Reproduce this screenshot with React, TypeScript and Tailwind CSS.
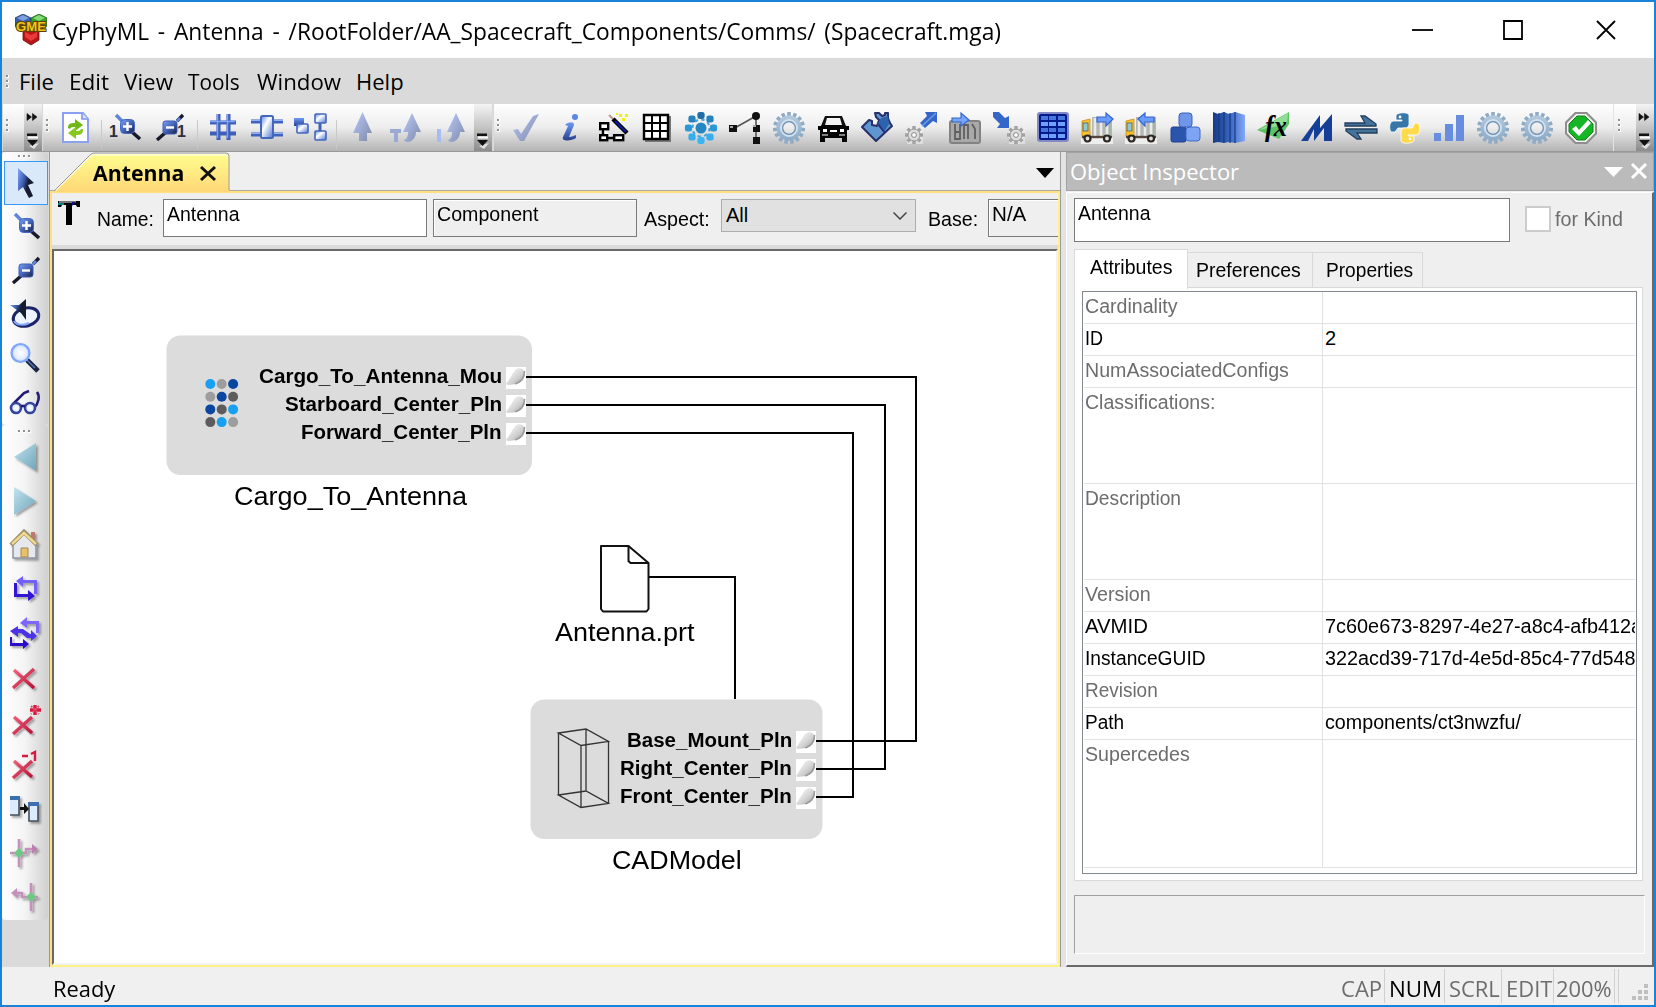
import { useLayoutEffect, useRef, useState, type ReactNode } from "react";

/* Text stretched horizontally so that it fills a given width. */
function Fit({ w, className = "", children }: { w: number; className?: string; children: ReactNode }) {
  const ref = useRef<HTMLSpanElement>(null);
  const [scale, setScale] = useState(1);
  useLayoutEffect(() => {
    if (ref.current) setScale(w / ref.current.offsetWidth);
  }, [w]);
  return (
    <span className={`block whitespace-pre ${className}`} style={{ width: w }}>
      <span ref={ref} className="inline-block origin-left" style={{ transform: `scaleX(${scale})` }}>
        {children}
      </span>
    </span>
  );
}

const UI = "font-['Open_Sans',sans-serif]";
const SANS = "font-['Liberation_Sans',sans-serif]";

function Icon({ children, className = "" }: { children: ReactNode; className?: string }) {
  return (
    <span className={`flex size-11 shrink-0 items-center justify-center ${className}`}>
      <svg viewBox="0 0 32 32" className="size-8 overflow-visible">
        {children}
      </svg>
    </span>
  );
}

function Defs() {
  return (
    <svg className="absolute size-0">
      <defs>
        <linearGradient id="blue" x1="0" y1="0" x2="1" y2="1">
          <stop offset="0" stopColor="#7ba0f4" />
          <stop offset=".5" stopColor="#4464b8" />
          <stop offset="1" stopColor="#16203c" />
        </linearGradient>
        <linearGradient id="cursor" x1="0" y1="0" x2="1" y2=".5">
          <stop offset="0" stopColor="#86a9f8" />
          <stop offset=".45" stopColor="#3d5cb4" />
          <stop offset=".7" stopColor="#171c30" />
        </linearGradient>
        <linearGradient id="blueV" x1="0" y1="0" x2="0" y2="1">
          <stop offset="0" stopColor="#6f9af8" />
          <stop offset="1" stopColor="#27408c" />
        </linearGradient>
        <linearGradient id="pale" x1="0" y1="0" x2="1" y2="1">
          <stop offset="0" stopColor="#b9cbfb" />
          <stop offset="1" stopColor="#7f88a8" />
        </linearGradient>
        <linearGradient id="box" x1="0" y1="0" x2="1" y2="1">
          <stop offset="0" stopColor="#5a86e8" />
          <stop offset=".4" stopColor="#ffffff" />
          <stop offset="1" stopColor="#4a70d0" />
        </linearGradient>
        <linearGradient id="teal" x1="0" y1="0" x2="1" y2="1">
          <stop offset="0" stopColor="#c3e3ee" />
          <stop offset="1" stopColor="#6da5ba" />
        </linearGradient>
        <linearGradient id="red" gradientUnits="userSpaceOnUse" x1="3" y1="6" x2="25" y2="28">
          <stop offset="0" stopColor="#fb6b86" />
          <stop offset="1" stopColor="#b30d33" />
        </linearGradient>
        <linearGradient id="gear" x1="0" y1="0" x2="0" y2="1">
          <stop offset="0" stopColor="#b4cbe0" />
          <stop offset="1" stopColor="#8ba9c6" />
        </linearGradient>
        <radialGradient id="lens">
          <stop offset="0" stopColor="#ffffff" />
          <stop offset=".7" stopColor="#e2ecff" />
          <stop offset="1" stopColor="#a8c3ff" />
        </radialGradient>
        <linearGradient id="port" x1="0" y1="0" x2="1" y2="1">
          <stop offset=".2" stopColor="#f2f2f2" />
          <stop offset=".6" stopColor="#cfcfcf" />
          <stop offset="1" stopColor="#8c8c8c" />
        </linearGradient>
        <linearGradient id="tab" x1="0" y1="0" x2="0" y2="1">
          <stop offset="0" stopColor="#fffd8e" />
          <stop offset="1" stopColor="#ffd777" />
        </linearGradient>
        <linearGradient id="book" x1="0" y1="0" x2="1" y2="0">
          <stop offset="0" stopColor="#173a86" />
          <stop offset=".55" stopColor="#3a68c4" />
          <stop offset="1" stopColor="#86a8f8" />
        </linearGradient>
        <filter id="shadow" x="-30%" y="-30%" width="160%" height="160%">
          <feDropShadow dx="2" dy="2" stdDeviation="1" floodColor="#000" floodOpacity=".35" />
        </filter>
      </defs>
    </svg>
  );
}

const TEETH = [0, 24, 48, 72, 96, 120, 144, 168, 192, 216, 240, 264, 288, 312, 336];

function Gear() {
  return (
    <Icon>
      <g fill="url(#gear)">
        {TEETH.map((a) => (
          <rect key={a} x="14.2" y="0" width="3.6" height="6" transform={`rotate(${a} 16 16)`} fill="#8fabc6" />
        ))}
        <path fillRule="evenodd" d="M16 3.5a12.5 12.5 0 1 0 0 25a12.5 12.5 0 1 0 0-25zM16 10a6 6 0 1 1 0 12a6 6 0 1 1 0-12z" />
      </g>
      <circle cx="16" cy="16" r="8" fill="none" stroke="#d4e0ec" strokeWidth="2" />
      <circle cx="16" cy="16" r="6.4" fill="none" stroke="#6f94b8" strokeWidth="1.200" />
    </Icon>
  );
}

function SmallGear({ x, y }: { x: number; y: number }) {
  return (
    <g>
      <rect x={x - 7} y={y - 7} width="16" height="16" fill="#eee" opacity=".6" />
      {[0, 45, 90, 135].map((a) => (
        <rect key={a} x={x - 1.7} y={y - 9} width="3.4" height="18" fill="#a2a2a2" transform={`rotate(${a} ${x} ${y})`} />
      ))}
      <circle cx={x} cy={y} r="6" fill="#dcdcdc" stroke="#999" />
      <circle cx={x} cy={y} r="2.4" fill="#fff" stroke="#888" />
    </g>
  );
}

function Truck({ left }: { left?: boolean }) {
  return (
    <Icon>
      <rect x="0" y="26" width="32" height="6" fill="#eeeeee" />
      <path d="M11 5h20v20H11z" fill="#b4b8b5" />
      <path d="M14 6v18M20 6v18M26 6v18" stroke="#e9ebe9" strokeWidth="2.6" />
      <path d="M29 6v18" stroke="#a3b6a3" strokeWidth="2" />
      <path d="M1 9l8-2v17H1z" fill="#fdc02c" stroke="#c98f10" strokeWidth=".8" />
      <rect x="2" y="11" width="5" height="8" fill="#8ccbd6" stroke="#47616a" strokeWidth=".8" />
      <path d="M1 25h30" stroke="#55443a" strokeWidth="2.4" />
      <g fill="#ddd" stroke="#2d2622" strokeWidth="2.2">
        <circle cx="6.500" cy="26.5" r="3" />
        <circle cx="26" cy="26.5" r="3" />
      </g>
      <path
        d={left ? "M13 7l7-6v4h9v5h-9v4z" : "M32 7l-7-6v4h-9v5h9v4z"}
        fill="#6a9bff"
        stroke="#3465cf"
        strokeWidth="1.2"
      />
    </Icon>
  );
}

function Magnifier({ minus }: { minus?: boolean }) {
  return minus ? (
    <>
      <path d="M2 28l8-7M22 9l6-6" stroke="#161a2c" strokeWidth="3.4" />
      <path d="M22 9l3-3" stroke="#5f83df" strokeWidth="3" />
      <rect x="8" y="9" width="14" height="13" rx="2.5" fill="url(#blue)" stroke="#3c5cb4" />
      <path d="M11 15.5h8" stroke="#fff" strokeWidth="2.4" />
    </>
  ) : (
    <>
      <path d="M4 3l6 6" stroke="#5f83df" strokeWidth="3.4" />
      <path d="M20 20l8 7" stroke="#161a2c" strokeWidth="3.6" />
      <rect x="8.500" y="7.500" width="14" height="14" rx="4" fill="url(#blue)" stroke="#4467c4" />
      <path d="M11 14.500h9M15.500 10v9" stroke="#fff" strokeWidth="2.4" />
    </>
  );
}

function ArrowUp({ x }: { x: number }) {
  return <path transform={`translate(${x} 0)`} d="M9.500 0L19 21h-5v8H6v-8H0z" fill="url(#pale)" />;
}

function BentArrow({ x }: { x: number }) {
  return (
    <path
      transform={`translate(${x} 0)`}
      d="M12 1l9 19h-5c0 5-3 9-8 10c-2 0-4-1-4-2c3-1 4-4 4-8H3z"
      fill="url(#pale)"
    />
  );
}

function Grip({ className = "" }: { className?: string }) {
  return (
    <span className={`flex w-1 shrink-0 flex-col gap-[2px] ${className}`}>
      {[0, 1, 2].map((i) => (
        <i key={i} className="size-[3px] border-r border-b border-white bg-[#909090]" />
      ))}
    </span>
  );
}

function ToolbarEnd({ chevron, w }: { chevron?: boolean; w: string }) {
  return (
    <span className={`flex h-full shrink-0 justify-center bg-linear-to-b from-[#f4f4f4] via-[#c4c4c4] to-[#8c8c8c] ${w}`}>
      <svg viewBox="0 0 18 47" className="h-[47px] w-[18px]">
        {chevron && <path d="M3 9.500l4.500 3.500L3 16.500zM8.500 9.500l4.500 3.500l-4.500 3.500z" fill="#111" stroke="#111" strokeWidth=".6" />}
        <path d="M4 33.500h10" stroke="#fff" strokeWidth="2" />
        <path d="M5 42l5 3l5-6z" fill="#fff" opacity=".7" />
        <path d="M3 29.500h10v2.500H3zM3 36h11l-5.500 6z" fill="#111" />
      </svg>
    </span>
  );
}

function Sep({ w }: { w: string }) {
  return (
    <span className={`flex h-full shrink-0 justify-center pt-4 ${w}`}>
      <i className="h-[29px] w-px bg-[#c9c9c9]" />
    </span>
  );
}

const METAL = "bg-linear-to-b from-white via-[#ededed] to-[#b4b4b4]";

function MainToolbar() {
  return (
    <div className={`flex h-[47px] w-[449px] items-center ${METAL}`}>
      <Grip className="ml-[3px] mr-[4px] -mt-1" />
      <Icon>
        <path d="M3 1h20l5 6v23H3z" fill="#fff" stroke="#8ba0f0" strokeWidth="2" />
        <path d="M22 1v6h6" fill="#dbe3ff" stroke="#7f97ee" strokeWidth="1.6" />
        <path d="M8 16c0-4 2-5 7-5V7l8 6l-8 6v-4c-3 0-4 0-5 2z" fill="#6fb713" />
        <path d="M23 17c0 5-2 6-7 6v4l-8-6l8-6v4c3 0 4 0 5-2z" fill="#86c91c" />
      </Icon>
      <Sep w="w-[6px]" />
      <Icon className="-ml-px">
        <text x="0" y="25" fontSize="16" fontWeight="700" fontFamily="Liberation Sans" fill="#2b3040">1</text>
        <g transform="translate(3 0)"><Magnifier /></g>
      </Icon>
      <Icon className="ml-[2px]">
        <Magnifier minus />
        <text x="22" y="25" fontSize="16" fontWeight="700" fontFamily="Liberation Sans" fill="#2b3040">1</text>
      </Icon>
      <Sep w="w-2" />
      <Icon>
        <path d="M3 10.500h26M3 21.500h26M11.500 2v26M21.500 2v26" stroke="#3d5fb9" strokeWidth="4" />
        <path d="M3 9.500h25M10.500 2v24M20.500 2v24" stroke="#7fa3f5" strokeWidth="1.4" />
      </Icon>
      <Icon>
        <path d="M0 9.500h32M0 22.500h32" stroke="#3f62bd" strokeWidth="4" />
        <path d="M0 8.500h32M0 21.500h32" stroke="#8fb0fa" strokeWidth="1.2" />
        <rect x="10" y="4" width="12" height="22" rx="1.500" fill="url(#box)" stroke="#4466bd" strokeWidth="2" />
      </Icon>
      <Icon className="-ml-px">
        <path d="M26 9v12" stroke="#3f62bd" strokeWidth="3" />
        <rect x="0" y="6" width="10" height="8" fill="url(#blueV)" />
        <rect x="3" y="12" width="11" height="9" rx="1" fill="url(#box)" stroke="#4365bd" strokeWidth="1.6" />
        <rect x="21" y="2" width="11" height="9" rx="1" fill="url(#box)" stroke="#4365bd" strokeWidth="1.6" />
        <rect x="21" y="19" width="11" height="9" rx="1" fill="url(#box)" stroke="#4365bd" strokeWidth="1.6" />
      </Icon>
      <Sep w="w-2" />
      <Icon><ArrowUp x={7} /></Icon>
      <Icon>
        <BentArrow x={10} />
        <path d="M0 17h11v4H8v9H4v-9H0z" fill="#9ba9d4" />
      </Icon>
      <Icon>
        <BentArrow x={10} />
        <path d="M3 17h4v13H3z" fill="#a8bbf2" />
      </Icon>
      <span className="flex-1" />
      <ToolbarEnd w="w-[18px]" />
    </div>
  );
}

const PETALS: [number, number, string][] = [
  [16, 3.5, "#1f6fa8"],
  [25, 7, "#2883bd"],
  [28.5, 16, "#2d96d4"],
  [25, 25, "#35aeee"],
  [16, 28.5, "#39b5f5"],
  [7, 25, "#35aeee"],
  [3.5, 16, "#2d96d4"],
  [7, 7, "#2883bd"],
];

function ComponentToolbar() {
  return (
    <div className={`flex h-[47px] w-[1119px] items-center ${METAL}`}>
      <Grip className="ml-[3px] mr-[2px] -mt-1" />
      <Icon>
        <path d="M4 18l5-1l3 5L24 4l6-2L15 29h-4z" fill="url(#pale)" />
      </Icon>
      <Icon>
        <circle cx="22" cy="5" r="3" fill="#5a86ea" />
        <path d="M12 13c3-3 9-4 9 0l-5 12c2 0 4-1 7-2v3c-4 3-15 4-13-1l5-11z" fill="url(#blueV)" />
      </Icon>
      <Icon>
        <g fill="#fff" stroke="#000" strokeWidth="2.4">
          <path d="M6 16v10h10M6 26h10" />
          <rect x="3.200" y="11.200" width="8" height="6" />
          <rect x="3.200" y="23.200" width="7" height="5" />
          <rect x="17.200" y="23.200" width="9" height="5" />
        </g>
        <path d="M12 3l5 5" stroke="#b99a8a" strokeWidth="2" />
        <path d="M16 7l14 14" stroke="#000" strokeWidth="4.400" />
        <path d="M18 9l11 11" stroke="#101a9c" strokeWidth="2" />
        <path d="M22 2h3v3h-3zM28 2h3v3h-3zM25 6h3v3h-3zM19 1h2v2h-2z" fill="#f5f000" />
      </Icon>
      <Icon>
        <path d="M4 4h26v26H4z" fill="#777" />
        <path d="M3 3h24v24H3z" fill="#fff" stroke="#000" strokeWidth="2.400" />
        <path d="M11 3v24M19 3v24M3 11h24M3 19h24" stroke="#000" strokeWidth="2" />
      </Icon>
      <Icon>
        <circle cx="16" cy="16" r="8.500" fill="none" stroke="#49a3d8" strokeWidth="2" strokeDasharray="3.400 3.270" />
        {PETALS.map(([x, y, c]) => (
          <rect key={`${x}-${y}`} x={x - 3.6} y={y - 3.6} width="7.200" height="7.200" rx="2.400" fill={c} />
        ))}
        <circle cx="16" cy="16" r="5.500" fill="#2587c2" />
      </Icon>
      <Icon>
        <path d="M4 17L27 4M27 4v24" stroke="#555" strokeWidth="1.600" />
        <circle cx="27" cy="4" r="4" fill="#111" />
        <path d="M0 13h8v7H0zM24 13h7v7h-7zM24 25h7v7h-7z" fill="#111" />
        <path d="M1 14h3v2H1zM24 13h3v2h-3z" fill="#aaa" />
      </Icon>
      <Gear />
      <Icon>
        <path d="M8 4h17l4 10H4z" fill="#111" />
        <path d="M10 6h13l2 7H8z" fill="#f4f4f4" />
        <path d="M1 14h3l2-1h21l2 1h3v4h-2v12h-5v-4H8v4H3V18H1z" fill="#050505" />
        <path d="M6 17h4v3H6zM23 17h4v3h-4zM13 18h7v2h-7z" fill="#fff" />
        <path d="M5 23h6M22 23h6" stroke="#aaa" strokeWidth="1.400" />
      </Icon>
      <Icon>
        <path d="M1 15l4-4l3-3l3 1v4l5 1l2-6l-3-3l-1-4h4l3 3l3-1V1h3v5l2 5l2 3L15 29z" fill="#5f96cf" stroke="#27306b" strokeWidth="2" strokeLinejoin="round" />
        <path d="M16 13l4-7l7-2l1 8l-5 8z" fill="#2d62ad" />
        <path d="M17 12l7 9" stroke="#30307c" strokeWidth="2" />
      </Icon>
      <Icon>
        <SmallGear x={9} y={23} />
        <path d="M20 0h12v11l-4-2l-8 7l-5-5l7-7z" fill="#3566c8" />
        <path d="M31 1L17 14" stroke="#6f9ce8" strokeWidth="1.500" />
      </Icon>
      <Icon>
        <rect x="1" y="9" width="30" height="22" rx="2" fill="#a9a9a9" stroke="#828282" strokeWidth="2" />
        <path d="M6 12v15h5V12M15 27V13h4v14M23 12l3 5v10M6 20h4" stroke="#5f5f5f" strokeWidth="1.800" fill="none" />
        <path d="M3 6h9V1l8 7l-8 6v-4H3z" fill="#76a6fb" stroke="#3767cc" strokeWidth="1.200" />
      </Icon>
      <Icon>
        <SmallGear x={23} y={23} />
        <path d="M0 0h6l6 6l4-2v12H4l3-4l-7-7z" fill="#3566c8" />
      </Icon>
      <Icon>
        <rect x="0" y="0" width="32" height="30" rx="3" fill="#8289c4" />
        <rect x="2" y="2" width="28" height="26" rx="2" fill="#001a8c" />
        {[4, 10, 16, 22].map((y, r) =>
          [4, 12, 21].map((x) => (
            <rect key={`${x}-${y}`} x={x} y={y} width="7" height="4" fill={r % 2 ? "#6da0ff" : "#4476dd"} />
          )),
        )}
      </Icon>
      <Truck />
      <Truck left />
      <Icon>
        <rect x="2" y="15" width="15" height="15" rx="2" fill="#2b55ad" stroke="#1e428f" />
        <rect x="17" y="15" width="14" height="14" rx="3" fill="#7da3f5" stroke="#3e6acb" />
        <rect x="10" y="1" width="13" height="14" rx="3" fill="#7096ea" stroke="#3560bd" />
      </Icon>
      <Icon>
        <path d="M0 0l5 2l6-2l5 2l6-2l10 3v26l-10 2l-6-1l-5 1l-6-1l-5 1z" fill="url(#book)" />
        <path d="M6 1v29M11 0v31M17 1v30M22 0v31" stroke="#16377c" strokeWidth="1.200" />
      </Icon>
      <Icon>
        <path d="M32 0v12L22 27L0 18l16-9z" fill="#5cc266" />
        <path d="M31 1L2 18l28-6z" fill="#8fe096" />
        <text x="8" y="24" fontSize="29" fontStyle="italic" fontFamily="Liberation Serif" fontWeight="700" textLength="22" lengthAdjust="spacingAndGlyphs">fx</text>
      </Icon>
      <Icon>
        <path d="M0 29L19 3v13L31 2v27h-8V16L13 29V17L7 29z" fill="#153e97" />
      </Icon>
      <Icon>
        <path d="M0 11h20l-4-7h4l11 8v2H0zM32 21H12l4 6h-4L1 19v-2h31z" fill="#46739c" stroke="#213f5f" strokeWidth="1.300" />
      </Icon>
      <Icon>
        <path d="M7 3c3-3 12-3 13 0v10l-2 3H9l-3 4H2c-2-3-2-10 2-11h9V8H7z" fill="#3776a9" stroke="#fff" strokeWidth=".8" />
        <path d="M25 29c-3 3-12 3-13 0V19l2-3h9l3-5h3c3 3 2 11-1 12h-9v1h6z" fill="#ffda4b" stroke="#fff" strokeWidth=".8" />
        <circle cx="11" cy="5" r="1.400" fill="#fff" />
        <circle cx="21" cy="27" r="1.400" fill="#fff" />
      </Icon>
      <Icon>
        <path d="M1 21h7v8H1zM12 12h8v17h-8zM23 3h8v26h-8z" fill="#668ddf" />
      </Icon>
      <Gear />
      <Gear />
      <Icon>
        <path d="M10 0h12l10 10v12L22 32H10L0 22V10z" fill="#8e8e8e" />
        <path d="M11 2h10l9 9v10l-9 9H11l-9-9V11z" fill="#f3f3f3" />
        <path d="M12 4h8l8 8v8l-8 8h-8l-8-8v-8z" fill="#15b526" stroke="#14801e" />
        <path d="M7 17l4-3l3 4l9-10l3 3L14 24z" fill="#fff" />
      </Icon>
    </div>
  );
}

function SideCell({ children, active }: { children: ReactNode; active?: boolean }) {
  return (
    <div className={`flex h-11 w-11 items-center justify-center ${active ? "border border-[#3399ff] bg-[#d9e9fa]" : ""}`}>
      <svg viewBox="0 0 32 32" className="size-8 overflow-visible">{children}</svg>
    </div>
  );
}

function Dots() {
  return (
    <span className="ml-[14px] flex gap-[2px]">
      {[0, 1, 2].map((i) => (
        <i key={i} className="size-[3px] border-r border-b border-white bg-[#8f8f8f]" />
      ))}
    </span>
  );
}

const SIDE = "flex w-[46px] flex-col rounded-sm bg-linear-to-r from-white via-[#f4f4f4] to-[#d0d0d0] pl-[2px]";

function Sidebar() {
  return (
    <div className="flex w-[47px] shrink-0 flex-col bg-[#dadada]">
      <div className={`h-[273px] pt-[3px] ${SIDE}`}>
        <Dots />
        <div className="h-[3px]" />
        <SideCell active>
          <path d="M8 1v23l5-4l6 11l4-2l-5-11l6-2z" fill="url(#cursor)" />
        </SideCell>
        <SideCell><g transform="translate(1 0)"><Magnifier /></g></SideCell>
        <SideCell><g transform="translate(1 0)"><Magnifier minus /></g></SideCell>
        <SideCell>
          <ellipse cx="16" cy="18" rx="13" ry="9" fill="#eef3ff" stroke="#1c2468" strokeWidth="3" transform="rotate(-15 16 18)" />
          <path d="M4 22c2 4 9 5 15 2" fill="none" stroke="#86a6ff" strokeWidth="2" />
          <path d="M0 6l9 0l7-6v21l-5-7z" fill="url(#cursor)" />
        </SideCell>
        <SideCell>
          <path d="M17 17l11 11" stroke="#1c2440" strokeWidth="5" />
          <path d="M16 16l9 9" stroke="#5572bd" strokeWidth="1.500" />
          <circle cx="10.500" cy="10" r="9" fill="url(#lens)" stroke="#7fa5fa" strokeWidth="2.200" />
        </SideCell>
        <SideCell>
          <g fill="none" stroke="#241a78" strokeWidth="2.600">
            <path d="M3 17L14 6l5-2" />
            <path d="M27 5c3 4 2 11-3 16" />
            <circle cx="6" cy="21" r="5" fill="url(#lens)" stroke="#35459c" />
            <circle cx="20" cy="21" r="5" fill="url(#lens)" stroke="#35459c" />
            <path d="M11 19h4" />
          </g>
        </SideCell>
      </div>
      <div className={`h-[495px] pt-[5px] ${SIDE}`}>
        <Dots />
        <div className="h-[2px]" />
        <SideCell><path d="M4 16L26 2v28z" fill="url(#teal)" filter="url(#shadow)" /></SideCell>
        <SideCell><path d="M26 16L4 2v28z" fill="url(#teal)" filter="url(#shadow)" /></SideCell>
        <SideCell>
          <g filter="url(#shadow)">
            <path d="M21 3h4v10h-4z" fill="#c07870" />
            <path d="M3 16L14 5l12 11v13H3z" fill="#e6e8ee" stroke="#8d93a0" strokeWidth="1.500" />
            <path d="M1 16L14 3l13 13" fill="none" stroke="#9b8f6c" strokeWidth="4.500" />
            <path d="M2 15L14 4l12 11" fill="none" stroke="#f0d88c" strokeWidth="2.400" />
            <path d="M11 19h7v9h-7z" fill="#e8c069" stroke="#a08b58" />
          </g>
        </SideCell>
        <SideCell>
          <g filter="url(#shadow)">
            <path d="M6 8l7-5v4h14v14h-3V10H13v4z" fill="#735ffa" />
            <path d="M4 10h3v11h11v-4l7 6l-7 5v-4H4z" fill="#3212d4" />
          </g>
        </SideCell>
        <SideCell>
          <g filter="url(#shadow)">
            <path d="M10 6l7-6v4h12v12h-3V7h-9v4z" fill="#7b66fb" />
            <path d="M0 14l8-5v3h5l7 5h1v-4l6 6l-6 5v-3h-4l-6-5H8v4z" fill="#4b30e6" />
            <path d="M0 20h2v6h11v-4l6 5l-6 5v-3H0z" fill="#2a08cc" />
          </g>
        </SideCell>
        <SideCell><path d="M3 27L24 8M4 9l20 18" stroke="url(#red)" strokeWidth="3.400" filter="url(#shadow)" /></SideCell>
        <SideCell>
          <path d="M3 29L22 12M4 12l18 16" stroke="url(#red)" strokeWidth="3.400" filter="url(#shadow)" />
          <path d="M25 0v10M20 5h11" stroke="#d6193f" strokeWidth="3.400" />
          <path d="M21 1l8 8M29 1l-8 8" stroke="#e0506c" strokeWidth="2" strokeDasharray="2 1.500" />
        </SideCell>
        <SideCell>
          <path d="M3 29L22 12M4 12l18 16" stroke="url(#red)" strokeWidth="3.400" filter="url(#shadow)" />
          <path d="M12 7h6M21 5l4-2v9" fill="none" stroke="#d6193f" strokeWidth="2.400" />
        </SideCell>
        <SideCell>
          <g filter="url(#shadow)">
            <path d="M0 5h9v17H0" fill="#dcecff" stroke="#47505c" strokeWidth="1.600" />
            <path d="M0 3h10v4H0z" fill="#3b70ad" />
            <path d="M19 11h9v17h-9z" fill="#dcecff" stroke="#47505c" strokeWidth="1.600" />
            <path d="M18 9h11v4H18z" fill="#3b70ad" />
          </g>
          <path d="M10 14h4v-4l5 6l-5 5v-4h-4z" fill="#111" />
        </SideCell>
        <SideCell>
          <g filter="url(#shadow)">
            <path d="M9 2v28M0 16h16v-4h6" fill="none" stroke="#c590bb" strokeWidth="2.600" />
            <path d="M22 7l6 5l-6 5z" fill="#bc80b0" />
            <path d="M9 11l5 5l-5 5l-5-5z" fill="#6cc884" />
          </g>
        </SideCell>
        <SideCell>
          <g filter="url(#shadow)">
            <path d="M21 2v28M28 16H12v-4H6" fill="none" stroke="#c590bb" strokeWidth="2.600" />
            <path d="M7 7l-6 5l6 5z" fill="#c590bb" />
            <path d="M21 11l5 5l-5 5l-5-5z" fill="#6cc884" />
          </g>
        </SideCell>
      </div>
    </div>
  );
}

function Port({ x, y }: { x: number; y: number }) {
  return (
    <svg x={x} y={y} width="20" height="22" viewBox="0 0 20 22">
      <rect width="20" height="22" fill="#fff" />
      <path d="M0 17L9 3c3-3 9-2 10 3c0 6-4 10-9 11l-8 1z" fill="url(#port)" />
      <path d="M18.500 4c0 7-4 11-9 13" fill="none" stroke="#9a9a9a" strokeWidth="1.500" />
    </svg>
  );
}

const DOT_COLORS = [
  ["#18a0f0", "#9d9d9d", "#0b46a0"],
  ["#9d9d9d", "#0b46a0", "#5c5c5c"],
  ["#0b46a0", "#5c5c5c", "#18a0f0"],
  ["#5c5c5c", "#18a0f0", "#9d9d9d"],
];

/* Diagram surface; its drawing uses window coordinates offset by (54, 251). */
function Diagram() {
  const port = `absolute text-[20px]/[24px] font-bold ${SANS}`;
  const label = `absolute text-[26px]/[30px] ${SANS}`;
  return (
    <div className="relative flex-1 overflow-hidden bg-white">
      <svg viewBox="54 251 1001 712" className="absolute left-0 top-0 h-[712px] w-[1001px]">
        <rect x="166.500" y="335.500" width="365.500" height="139.500" rx="14" fill="#dcdcdc" />
        <rect x="530.500" y="699.500" width="292" height="139.500" rx="14" fill="#dcdcdc" />
        <g fill="none" stroke="#000" strokeWidth="2">
          <path d="M526 377H916V741H816M526 405H885V769H816M526 433H853V797H816" />
          <path d="M649 577H735V699" />
        </g>
        {DOT_COLORS.map((row, r) =>
          row.map((c, i) => <circle key={`${r}${i}`} cx={210.300 + i * 11.400} cy={384 + r * 12.700} r="5" fill={c} />),
        )}
        {[367, 395, 423].map((y) => <Port key={y} x={506} y={y} />)}
        {[731, 759, 787].map((y) => <Port key={y} x={796} y={y} />)}
        <path d="M601 546h27.500l20 17v46l-2 2.500h-43.500l-2-2.500z" fill="#fff" stroke="#111" strokeWidth="2" strokeLinejoin="round" />
        <path d="M628.500 546v15l2 2h18" fill="none" stroke="#111" strokeWidth="2" />
        <path
          d="M558.500 733l27.500-4l22.500 12.500l-27.500 4zM558.500 795l27.500-4l22.500 12.500l-27.500 4zM558.500 733v62M586 729v62M608.500 741.500v62M581 745.500v62"
          fill="none"
          stroke="#333"
          strokeWidth="1.300"
        />
      </svg>
      <Fit w={243} className={`left-[205px] top-[113px] ${port}`}>Cargo_To_Antenna_Mou</Fit>
      <Fit w={217} className={`left-[231px] top-[141px] ${port}`}>Starboard_Center_Pln</Fit>
      <Fit w={201} className={`left-[247px] top-[169px] ${port}`}>Forward_Center_Pln</Fit>
      <Fit w={233} className={`left-[180px] top-[230px] ${label}`}>Cargo_To_Antenna</Fit>
      <Fit w={139} className={`left-[501px] top-[366px] ${label}`}>Antenna.prt</Fit>
      <Fit w={165} className={`left-[573px] top-[477px] ${port}`}>Base_Mount_Pln</Fit>
      <Fit w={172} className={`left-[566px] top-[505px] ${port}`}>Right_Center_Pln</Fit>
      <Fit w={172} className={`left-[566px] top-[533px] ${port}`}>Front_Center_Pln</Fit>
      <Fit w={130} className={`left-[558px] top-[594px] ${label}`}>CADModel</Fit>
    </div>
  );
}

function DocumentPane() {
  const field = "h-[38px] border border-[#7a7a7a] pl-[3px] pt-px leading-[28px]";
  return (
    <div className="flex w-[1012px] shrink-0 flex-col border-l border-r border-[#9a9a9a] bg-[#efefef]">
      <div className="flex h-[39px] shrink-0 items-start border-b border-[#a8a8a8]">
        <div className="relative h-[40px] w-[182px]">
          <svg viewBox="0 0 182 40" className="absolute inset-0 h-10 w-[182px]">
            <path d="M4 40L40 4q2-2 4-2h133q2 0 2 3v35z" fill="url(#tab)" />
            <path d="M4 39L40 3q2-2 4-2h132q3 0 3 3v34" fill="none" stroke="#9a9a9a" />
            <path d="M5.500 39L41 4q1-1 4-1h130q2 0 2 2" fill="none" stroke="#fff" />
            <path d="M151 15l14 13M165 15l-14 13" stroke="#111" strokeWidth="3" />
          </svg>
          <Fit w={91} className={`relative ml-[43px] pt-[5px] text-[21.500px]/[32px] font-bold ${UI}`}>Antenna</Fit>
        </div>
        <svg viewBox="0 0 18 10" className="ml-auto mr-[6px] mt-[16px] h-[10px] w-[18px]"><path d="M0 0h18l-9 10z" fill="#000" /></svg>
      </div>
      <div className="flex flex-1 flex-col border-2 border-[#ffe07d] border-r-[#fff18a] border-b-[#fff18a]">
        <div className={`flex h-[56px] shrink-0 items-start overflow-hidden border-b-4 border-[#dadada] pt-[6px] text-[20px] ${SANS}`}>
          <svg viewBox="0 0 22 24" className="ml-[6px] mt-[2px] h-6 w-[22px]">
            <path d="M0 0h22v6h-3l-1-2h-4v20H8V4H4L3 6H0z" fill="#000" />
            <path d="M1 0h17v2H1z" fill="#777" />
            <path d="M0 2h6v2H0z" fill="#0a8080" />
            <path d="M14 1h4l-4 4z" fill="#10108c" />
          </svg>
          <Fit w={57} className="ml-[17px] mt-[4px] leading-[32px]">Name:</Fit>
          <div className={`ml-[9px] w-[264px] bg-white ${field}`}><Fit w={73} className="-mt-px">Antenna</Fit></div>
          <div className={`ml-[6px] w-[204px] shadow-[inset_1px_1px_0_#fff] ${field}`}><Fit w={101} className="-mt-px">Component</Fit></div>
          <Fit w={66} className="ml-[7px] mt-[4px] shrink-0 leading-[32px]">Aspect:</Fit>
          <div className="ml-[11px] flex h-[33px] w-[195px] shrink-0 items-start justify-between border border-[#adadad] bg-[#e1e1e1] pl-[4px] pt-px leading-[28px]">
            <Fit w={22}>All</Fit>
            <svg viewBox="0 0 14 8" className="mr-[8px] mt-[11px] h-2 w-[14px]"><path d="M.5.5L7 7L13.500.5" fill="none" stroke="#444" strokeWidth="1.500" /></svg>
          </div>
          <Fit w={50} className="ml-[12px] mt-[4px] shrink-0 leading-[32px]">Base:</Fit>
          <div className={`ml-[10px] flex-1 shrink-0 border-r-0! shadow-[inset_1px_1px_0_#fff] ${field}`}><Fit w={34} className="-mt-px">N/A</Fit></div>
        </div>
        <div className="flex flex-1 flex-col border-t-2 border-r-2 border-b-2 border-l-2 border-t-[#696969] border-r-[#f2f2f2] border-b-[#f2f2f2] border-l-[#696969]">
          <Diagram />
        </div>
      </div>
    </div>
  );
}

type Row = { name: string; w: number; h: string; value?: string; vw?: number };
const ROWS: Row[] = [
  { name: "Cardinality", w: 92, h: "h-8" },
  { name: "ID", w: 18, h: "h-8", value: "2", vw: 11 },
  { name: "NumAssociatedConfigs", w: 204, h: "h-8" },
  { name: "Classifications:", w: 130, h: "h-24" },
  { name: "Description", w: 96, h: "h-24" },
  { name: "Version", w: 66, h: "h-8" },
  { name: "AVMID", w: 63, h: "h-8", value: "7c60e673-8297-4e27-a8c4-afb412a", vw: 317 },
  { name: "InstanceGUID", w: 121, h: "h-8", value: "322acd39-717d-4e5d-85c4-77d548", vw: 311 },
  { name: "Revision", w: 73, h: "h-8" },
  { name: "Path", w: 39, h: "h-8", value: "components/ct3nwzfu/", vw: 196 },
  { name: "Supercedes", w: 105, h: "h-32" },
];

function Inspector() {
  return (
    <div className="ml-[5px] flex flex-1 flex-col bg-[#efefef]">
      <div className="flex h-[39px] shrink-0 items-center border border-[#a3a3a3] bg-[#bbbbbb] pl-[3px]">
        <Fit w={169} className={`-mt-[2px] text-[22px]/[36px] text-white ${UI}`}>Object Inspector</Fit>
        <svg viewBox="0 0 44 18" className="-mt-[2px] ml-auto mr-[5px] h-[18px] w-11">
          <path d="M0 5h19l-9.500 10z" fill="#fff" />
          <path d="M28 2l14 14M42 2L28 16" stroke="#fff" strokeWidth="3" />
        </svg>
      </div>
      <div className={`mt-px flex flex-1 flex-col border-t border-l border-r-2 border-b-2 border-t-white border-l-white border-r-[#696969] border-b-[#696969] pl-[7px] pt-[5px] text-[20px] ${SANS}`}>
        <div className="flex h-[44px] shrink-0 items-start">
          <div className="h-[44px] w-[436px] border border-[#7a7a7a] bg-white pl-[3px] leading-[28px]"><Fit w={73}>Antenna</Fit></div>
          <i className="ml-[15px] mt-[8px] size-[26px] border-2 border-[#cccccc] bg-white" />
          <Fit w={68} className="ml-[4px] mt-[5px] leading-[32px] text-[#6d6d6d]">for Kind</Fit>
        </div>
        <div className="mt-[6px] flex h-[40px] shrink-0 items-end">
          <div className="relative z-10 -mb-px h-[40px] w-[114px] border border-b-0 border-[#d9d9d9] bg-white pl-[15px] pt-px leading-[32px]"><Fit w={82}>Attributes</Fit></div>
          <div className="h-[36px] w-[125px] border-t border-r border-[#d9d9d9] pl-[8px] pt-px leading-[32px]"><Fit w={105}>Preferences</Fit></div>
          <div className="h-[36px] w-[110px] border-t border-r border-[#d9d9d9] pl-[13px] pt-px leading-[32px]"><Fit w={87}>Properties</Fit></div>
        </div>
        <div className="-mt-px h-[594px] w-[569px] shrink-0 border border-[#d9d9d9] bg-white pl-[7px] pt-[3px]">
          <div className="h-[583px] w-[555px] border border-[#828790] px-px">
            {ROWS.map((r) => (
              <div key={r.name} className={`flex border-b border-[#e2e2e2] leading-[28px] ${r.h} ${r.value ? "text-black" : "text-[#6d6d6d]"}`}>
                <div className="w-[239px] shrink-0 border-r border-[#e2e2e2] pl-px"><Fit w={r.w}>{r.name}</Fit></div>
                <div className="flex-1 overflow-hidden pl-[2px]">{r.value && r.vw && <Fit w={r.vw}>{r.value}</Fit>}</div>
              </div>
            ))}
          </div>
        </div>
        <div className="mt-[14px] h-[59px] w-[571px] shrink-0 border border-t-[#a0a0a0] border-l-[#a0a0a0] border-r-white border-b-white" />
      </div>
    </div>
  );
}

function StatusBar() {
  const cell = "flex h-[34px] items-center justify-end border-r border-[#d0d0d0] pt-[5px] pr-[2px]";
  return (
    <div className={`flex h-[38px] shrink-0 items-center bg-[#f0f0f0] text-[21.500px]/[29px] text-[#6d6d6d] ${UI}`}>
      <Fit w={62} className="ml-[51px] pt-[5px] text-black">Ready</Fit>
      <div className={`ml-auto ${cell}`}><Fit w={41}>CAP</Fit></div>
      <div className={`w-[60px] text-black ${cell}`}><Fit w={53}>NUM</Fit></div>
      <div className={`w-[57px] pr-px! ${cell}`}><Fit w={51}>SCRL</Fit></div>
      <div className={`w-[52px] pr-px! ${cell}`}><Fit w={46}>EDIT</Fit></div>
      <div className={`w-[61px] ${cell}`}><Fit w={56}>200%</Fit></div>
      <div className="h-[34px] w-[4px] border-r border-[#d0d0d0]" />
      <svg viewBox="0 0 16 16" className="ml-[13px] mr-[6px] mt-3 size-4">
        <path d="M12 0h4v4h-4zM6 6h4v4H6zM12 6h4v4h-4zM0 12h4v4H0zM6 12h4v4H6zM12 12h4v4h-4z" fill="#bfbfbf" />
      </svg>
    </div>
  );
}

function TitleBar() {
  return (
    <div className="flex h-14 shrink-0 items-center bg-white">
      <svg viewBox="0 0 32 32" className="-mt-px ml-[13px] size-8">
        <path d="M8 0l8 4v8l-8 5l-8-5V4z" fill="#3a5fb0" stroke="#24396f" strokeWidth=".8" />
        <path d="M24 0l8 4v8l-8 5l-8-5V4z" fill="#35a02c" stroke="#1d5c18" strokeWidth=".8" />
        <path d="M8 1l6 3l-6 3l-6-3z" fill="#7fa0dc" />
        <path d="M24 1l6 3l-6 3l-6-3z" fill="#86db74" />
        <path d="M16 13l8 5v8l-8 5l-8-5v-8z" fill="#b81616" stroke="#6e0c0c" strokeWidth=".8" />
        <path d="M10 18l6 3l6-3v5l-6 4l-6-4z" fill="#ea3a3a" />
        <text x="1" y="17" fontFamily="Liberation Sans" fontWeight="700" fontSize="13" textLength="30" lengthAdjust="spacingAndGlyphs" fill="#f2c51c" stroke="#5d4300" strokeWidth="2" paintOrder="stroke">GME</text>
      </svg>
      <Fit w={949} className={`ml-[5px] pt-[2px] text-[23.500px]/[32px] [word-spacing:3px] text-black ${UI}`}>CyPhyML - Antenna - /RootFolder/AA_Spacecraft_Components/Comms/ (Spacecraft.mga)</Fit>
      <svg viewBox="0 0 204 22" className="-mt-px ml-auto mr-[38px] h-[22px] w-[204px]" fill="none" stroke="#000" strokeWidth="1.800">
        <path d="M0 11h21" />
        <path d="M92 2h18v18H92z" />
        <path d="M185 2l18 18M203 2l-18 18" />
      </svg>
    </div>
  );
}

export default function App() {
  return (
    <div className="flex h-[1007px] w-[1656px] flex-col overflow-hidden border-2 border-[#1883d7] bg-[#e3e3e3] text-black">
      <Defs />
      <TitleBar />
      <div className={`flex h-[46px] shrink-0 items-center bg-[#dadada] text-[22px]/[32px] ${UI}`}>
        <Grip className="ml-1 mt-0" />
        <Fit w={35} className="ml-[9px]">File</Fit>
        <Fit w={40} className="ml-[15px]">Edit</Fit>
        <Fit w={49} className="ml-[15px]">View</Fit>
        <Fit w={52} className="ml-[15px]">Tools</Fit>
        <Fit w={84} className="ml-[17px]">Window</Fit>
        <Fit w={48} className="ml-[15px]">Help</Fit>
      </div>
      <div className="flex h-[48px] shrink-0 border-b border-[#999] bg-[#d9d9d9] pl-px">
        <div className={`flex h-[47px] w-[39px] items-center ${METAL}`}>
          <Grip className="ml-[3px] -mt-1" />
          <span className="flex-1" />
          <ToolbarEnd chevron w="w-[18px]" />
        </div>
        <div className="w-px" />
        <MainToolbar />
        <div className="w-[2px]" />
        <ComponentToolbar />
        <div className={`flex h-[47px] flex-1 items-center border-l border-[#e4e4e4] ${METAL}`}>
          <Grip className="ml-1 -mt-1" />
          <span className="flex-1" />
          <ToolbarEnd chevron w="w-[18px]" />
        </div>
      </div>
      <div className="flex h-[815px] shrink-0">
        <Sidebar />
        <DocumentPane />
        <Inspector />
      </div>
      <StatusBar />
    </div>
  );
}
